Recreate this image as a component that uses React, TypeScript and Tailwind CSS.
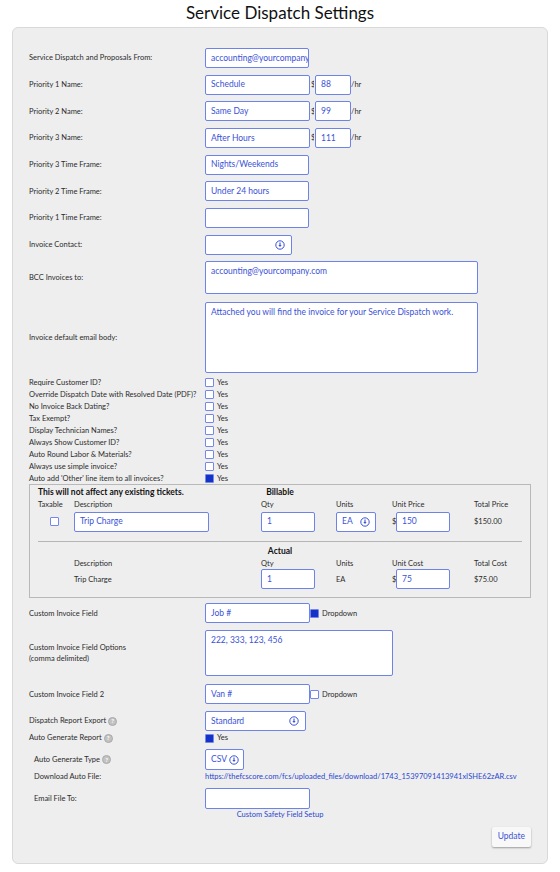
import React from "react";

const boxCls =
  "h-[20px] bg-white border-[1.5px] border-[#6d83e8] rounded-[2px] px-[5px] text-[8.5px] text-[#3b52d6] flex items-center whitespace-nowrap overflow-hidden";

function SelIcon() {
  return (
    <svg width="10" height="10" viewBox="0 0 10 10" className="shrink-0">
      <circle cx="5" cy="5" r="4.2" fill="none" stroke="#3b52d6" strokeWidth="1" />
      <path d="M5 2.6v3.2" stroke="#3b52d6" strokeWidth="1.1" fill="none" />
      <path d="M3.4 5 5 7 6.6 5z" fill="#3b52d6" />
    </svg>
  );
}

function Help() {
  return (
    <span className="inline-flex w-[9px] h-[9px] rounded-full bg-[#c2c2c2] border border-[#a9a9a9] text-white text-[6px] font-bold items-center justify-center ml-[2px] leading-none">
      ?
    </span>
  );
}

function Check({ checked }: { checked?: boolean }) {
  return checked ? (
    <span className="inline-block w-[9px] h-[9px] border-[1.5px] border-[#7488ea] bg-[#1432c8] rounded-[1px] shrink-0" />
  ) : (
    <span className="inline-block w-[9px] h-[9px] border-[1.5px] border-[#7488ea] bg-white rounded-[1px] shrink-0" />
  );
}

const labelCls = "w-[176px] shrink-0 text-[7.5px] text-[#2b2b2b] whitespace-nowrap";

function Row({
  label,
  children,
  indent,
  className = "",
}: {
  label: React.ReactNode;
  children: React.ReactNode;
  indent?: boolean;
  className?: string;
}) {
  return (
    <div className={"flex items-center " + className}>
      <div className={labelCls + (indent ? " pl-[5px]" : "")}>{label}</div>
      <div className="flex items-center">{children}</div>
    </div>
  );
}

function CheckRow({ label, checked }: { label: string; checked?: boolean }) {
  return (
    <div className="flex items-center h-[12px]">
      <div className={labelCls}>{label}</div>
      <Check checked={checked} />
      <span className="ml-[3px] text-[7.5px] text-[#2b2b2b]">Yes</span>
    </div>
  );
}

export default function App() {
  return (
    <div className="w-[560px] h-[872px] bg-white" style={{ fontFamily: "Lato, 'Open Sans', sans-serif" }}>
      <div className="h-[27px] flex items-center justify-center text-[17px] text-[#111] leading-none pb-[3px]">
        Service Dispatch Settings
      </div>
      <div className="mx-[12px] w-[536px] border border-[#d9d9d9] rounded-[6px] bg-[#eeeeee] px-[16px] pt-[20px] pb-[16px]">
        <div className="flex flex-col gap-[6.67px]">
          <Row label="Service Dispatch and Proposals From:">
            <div className={boxCls + " w-[104px]"}>accounting@yourcompany.com</div>
          </Row>
          {[
            ["Priority 1 Name:", "Schedule", "88"],
            ["Priority 2 Name:", "Same Day", "99"],
            ["Priority 3 Name:", "After Hours", "111"],
          ].map(([l, v, p]) => (
            <Row key={l} label={l}>
              <div className={boxCls + " w-[105px]"}>{v}</div>
              <span className="text-[7.5px] text-[#2b2b2b] ml-[1px] w-[3px] overflow-hidden">$</span>
              <div className={boxCls + " w-[36px] ml-[1px]"}>{p}</div>
              <span className="text-[7.5px] text-[#2b2b2b]">/hr</span>
            </Row>
          ))}
          <Row label="Priority 3 Time Frame:">
            <div className={boxCls + " w-[104px]"}>Nights/Weekends</div>
          </Row>
          <Row label="Priority 2 Time Frame:">
            <div className={boxCls + " w-[104px]"}>Under 24 hours</div>
          </Row>
          <Row label="Priority 1 Time Frame:">
            <div className={boxCls + " w-[104px]"}></div>
          </Row>
          <Row label="Invoice Contact:">
            <div className={boxCls + " w-[87px] justify-end pr-[6px]"}>
              <SelIcon />
            </div>
          </Row>
          <Row label="BCC Invoices to:">
            <div className={boxCls.replace("h-[20px]", "h-[33px]").replace("items-center", "items-start") + " w-[273px] pt-[3px]"}>
              accounting@yourcompany.com
            </div>
          </Row>
        </div>
        <Row label="Invoice default email body:" className="mt-[8px]">
          <div className={boxCls.replace("h-[20px]", "h-[71px]").replace("items-center", "items-start") + " w-[273px] pt-[3px]"}>
            Attached you will find the invoice for your Service Dispatch work.
          </div>
        </Row>
        <div className="mt-[3px] flex flex-col">
          <CheckRow label="Require Customer ID?" />
          <CheckRow label="Override Dispatch Date with Resolved Date (PDF)?" />
          <CheckRow label="No Invoice Back Dating?" />
          <CheckRow label="Tax Exempt?" />
          <CheckRow label="Display Technician Names?" />
          <CheckRow label="Always Show Customer ID?" />
          <CheckRow label="Auto Round Labor & Materials?" />
          <CheckRow label="Always use simple invoice?" />
          <CheckRow label="Auto add 'Other' line item to all invoices?" checked />
        </div>

        {/* Line item box */}
        <div className="border border-[#b9b9b9] px-[8px] pt-[1px] pb-[8px] text-[7.5px] text-[#2b2b2b]">
          <div className="grid grid-cols-[1fr_auto_1fr] items-center h-[12px]">
            <div className="font-bold text-[8.5px] text-[#111] whitespace-nowrap">This will not affect any existing tickets.</div>
            <div className="font-bold text-[8.5px] text-[#111]">Billable</div>
            <div />
          </div>
          <div className="grid grid-cols-[36px_187px_75px_56px_82px_1fr] items-center h-[13px]">
            <div>Taxable</div>
            <div>Description</div>
            <div>Qty</div>
            <div>Units</div>
            <div>Unit Price</div>
            <div>Total Price</div>
          </div>
          <div className="grid grid-cols-[36px_187px_75px_56px_82px_1fr] items-center h-[20px] mt-[0.5px]">
            <div className="pl-[12px] flex items-center">
              <Check />
            </div>
            <div>
              <div className={boxCls + " w-[135px]"}>Trip Charge</div>
            </div>
            <div>
              <div className={boxCls + " w-[54px]"}>1</div>
            </div>
            <div>
              <div className={boxCls + " w-[40px] justify-between pr-[5px]"}>
                <span>EA</span>
                <SelIcon />
              </div>
            </div>
            <div className="flex items-center">
              <span className="w-[4px] overflow-hidden">$</span>
              <div className={boxCls + " w-[54px]"}>150</div>
            </div>
            <div>$150.00</div>
          </div>
          <div className="mt-[9.5px] h-px bg-[#b5b5b5]" />
          <div className="mt-[2.7px] h-[12px] flex items-center justify-center font-bold text-[8.5px] text-[#111]">Actual</div>
          <div className="grid grid-cols-[36px_187px_75px_56px_82px_1fr] items-center h-[12.5px]">
            <div />
            <div>Description</div>
            <div>Qty</div>
            <div>Units</div>
            <div>Unit Cost</div>
            <div>Total Cost</div>
          </div>
          <div className="grid grid-cols-[36px_187px_75px_56px_82px_1fr] items-center h-[20px]">
            <div />
            <div>Trip Charge</div>
            <div>
              <div className={boxCls + " w-[54px]"}>1</div>
            </div>
            <div>EA</div>
            <div className="flex items-center">
              <span className="w-[4px] overflow-hidden">$</span>
              <div className={boxCls + " w-[54px]"}>75</div>
            </div>
            <div>$75.00</div>
          </div>
        </div>

        <Row label="Custom Invoice Field" className="mt-[5px]">
          <div className={boxCls + " w-[105px]"}>Job #</div>
          <Check checked />
          <span className="ml-[3px] text-[7.5px] text-[#2b2b2b]">Dropdown</span>
        </Row>
        <Row
          label={
            <div className="leading-[11px]">
              Custom Invoice Field Options
              <br />
              (comma delimited)
            </div>
          }
          className="mt-[6.7px]"
        >
          <div className={boxCls.replace("h-[20px]", "h-[46px]").replace("items-center", "items-start") + " w-[188px] pt-[3px]"}>
            222, 333, 123, 456
          </div>
        </Row>
        <Row label="Custom Invoice Field 2" className="mt-[8.3px]">
          <div className={boxCls + " w-[105px]"}>Van #</div>
          <Check />
          <span className="ml-[3px] text-[7.5px] text-[#2b2b2b]">Dropdown</span>
        </Row>
        <Row
          label={
            <span className="flex items-center">
              Dispatch Report Export <Help />
            </span>
          }
          className="mt-[6.7px]"
        >
          <div className={boxCls + " w-[101px] justify-between pr-[6px]"}>
            <span>Standard</span>
            <SelIcon />
          </div>
        </Row>
        <div className="flex items-center h-[12px] mt-[1px]">
          <div className={labelCls + " flex items-center"}>
            Auto Generate Report <Help />
          </div>
          <Check checked />
          <span className="ml-[3px] text-[7.5px] text-[#2b2b2b]">Yes</span>
        </div>
        <Row
          indent
          label={
            <span className="flex items-center">
              Auto Generate Type <Help />
            </span>
          }
          className="mt-[5px]"
        >
          <div className={boxCls.replace("h-[20px]", "h-[21px]") + " w-[39px] justify-between pr-[4px]"}>
            <span>CSV</span>
            <SelIcon />
          </div>
        </Row>
        <div className="flex items-center h-[12px] mt-[0.6px]">
          <div className={labelCls + " pl-[5px]"}>Download Auto File:</div>
          <span className="text-[7.5px] text-[#2a47cf] whitespace-nowrap">
            https://thefcscore.com/fcs/uploaded_files/download/1743_15397091413941xISHE62zAR.csv
          </span>
        </div>
        <Row indent label="Email File To:" className="mt-[5.4px]">
          <div className={boxCls.replace("h-[20px]", "h-[21px]") + " w-[105px]"}></div>
        </Row>
        <div className="h-[12px] flex items-center justify-center text-[7.5px] text-[#2a47cf]">Custom Safety Field Setup</div>
        <div className="flex justify-end mt-[5.7px]">
          <div className="h-[20px] px-[6px] flex items-center bg-[#f8f8f8] rounded-[2px] shadow-[0_1px_2px_rgba(0,0,0,0.35)] text-[8.5px] text-[#3b52d6]">
            Update
          </div>
        </div>
      </div>
    </div>
  );
}
